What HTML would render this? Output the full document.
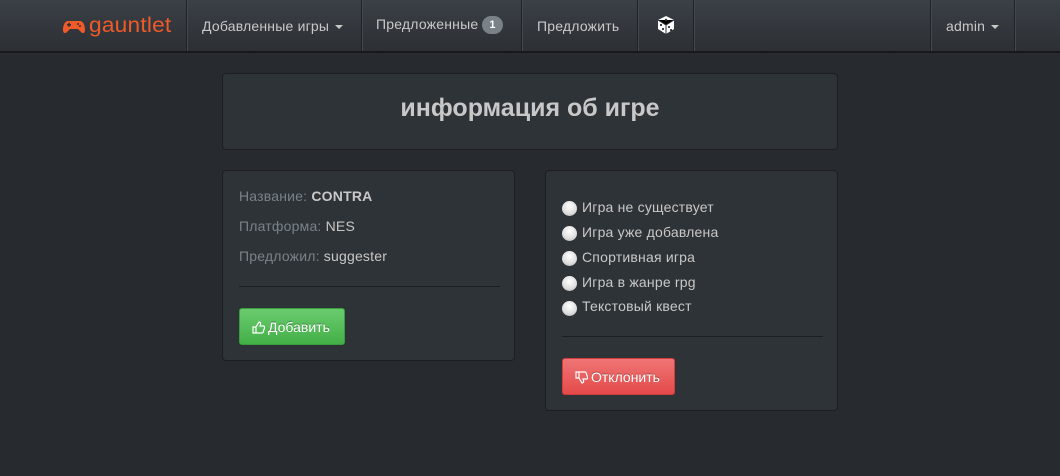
<!DOCTYPE html>
<html><head><meta charset="utf-8"><style>
*{box-sizing:border-box;margin:0;padding:0}
body{width:1060px;height:476px;background:#272b30;font-family:"Liberation Sans",sans-serif;font-size:14px;color:#c8c8c8;position:relative;overflow:hidden}
.nav{position:absolute;left:0;top:0;width:1060px;height:53px;background:linear-gradient(#3b4046,#2c3035);border-bottom:2px solid #16181b}
.sep{position:absolute;top:0;height:51px;width:1px;background:#202326;box-shadow:1px 0 0 #43484e}
.ni{position:absolute;top:18px;color:#c8c8c8;font-size:14px;letter-spacing:0.2px}
.caret{display:inline-block;width:0;height:0;border-left:4px solid transparent;border-right:4px solid transparent;border-top:4px solid #c8c8c8;vertical-align:middle;margin-left:6px}
.badge{display:inline-block;background:#7a8288;color:#fff;border-radius:10px;font-size:11px;font-weight:bold;padding:3px 7px;margin-left:4px;vertical-align:1px}
.panel{position:absolute;background:#2e3338;border:1px solid #1c1e22;border-radius:4px}
.hr{position:absolute;height:1px;background:#1c1e22}
.lbl{color:#7a8288}
.btn{position:absolute;height:37px;border-radius:3px;color:#fff;font-size:14px;line-height:36px;padding-left:12px;text-shadow:0 -1px 0 rgba(0,0,0,.3)}
.btn svg{vertical-align:-2px;margin-right:3px}
.radio{position:absolute;left:16px;width:15px;height:15px;border-radius:50%;background:radial-gradient(circle at 50% 35%,#fff,#ddd 60%,#aaa);}
.rt{position:absolute;left:36px;font-size:14px;color:#c8c8c8;letter-spacing:0.2px}
</style></head><body>
<div class="nav">
 <svg style="position:absolute;left:63px;top:20px" width="22" height="14" viewBox="0 0 22 14"><path d="M5 1h12c3 0 5 4 5 9 0 3-2 4-4 2l-3-3H7l-3 3c-2 2-4 1-4-2 0-5 2-9 5-9z" fill="#f05a28"/><rect x="4" y="4" width="4" height="1.6" fill="#2f3338"/><rect x="5.2" y="2.8" width="1.6" height="4" fill="#2f3338"/><circle cx="15" cy="4" r="1" fill="#2f3338"/><circle cx="17" cy="6" r="1" fill="#2f3338"/></svg>
 <div class="ni" style="left:89px;top:14px;color:#f05a28;font-size:21px;transform:scaleX(1.08);transform-origin:left">gauntlet</div>
 <div class="sep" style="left:186px"></div>
 <div class="ni" style="left:202px">Добавленные игры<span class="caret"></span></div>
 <div class="sep" style="left:361px"></div>
 <div class="ni" style="left:376px;top:16px">Предложенные<span class="badge">1</span></div>
 <div class="sep" style="left:521px"></div>
 <div class="ni" style="left:537px">Предложить</div>
 <div class="sep" style="left:637px"></div>
 <svg style="position:absolute;left:656px;top:15px" width="20" height="20" viewBox="0 0 20 20"><path d="M10 1l8 4v9l-8 5-8-5V5z" fill="#fff"/><path d="M10 10v9M2 5l8 5 8-5" stroke="#2f3338" stroke-width="1"/><circle cx="10" cy="5" r="1.2" fill="#2f3338"/><circle cx="5" cy="10" r="1.1" fill="#2f3338"/><circle cx="7" cy="14" r="1.1" fill="#2f3338"/><circle cx="13" cy="12" r="1.1" fill="#2f3338"/><circle cx="15" cy="15" r="1.1" fill="#2f3338"/></svg>
 <div class="sep" style="left:693px"></div>
 <div class="sep" style="left:930px"></div>
 <div class="ni" style="left:946px">admin<span class="caret"></span></div>
 <div class="sep" style="left:1014px"></div>
</div>

<div class="panel" style="left:222px;top:73px;width:616px;height:77px">
 <div style="position:absolute;left:0;right:0;top:20px;text-align:center;font-size:25px;font-weight:bold;color:#c8c8c8">информация об игре</div>
</div>

<div class="panel" style="left:222px;top:170px;width:293px;height:191px">
 <div style="position:absolute;left:16px;top:17px;letter-spacing:0.2px"><span class="lbl">Название:</span> <b>CONTRA</b></div>
 <div style="position:absolute;left:16px;top:47px;letter-spacing:0.2px"><span class="lbl">Платформа:</span> NES</div>
 <div style="position:absolute;left:16px;top:77px;letter-spacing:0.2px"><span class="lbl">Предложил:</span> suggester</div>
 <div class="hr" style="left:16px;top:115px;width:261px"></div>
 <div class="btn" style="left:16px;top:137px;width:106px;background:linear-gradient(#6acb6e,#43b047);border:1px solid #3a9d3e"><svg width="13" height="13" viewBox="0 0 13 13"><path d="M1 6h3v6H1zM4 6l3-5c1 0 2 1 1.5 2.5L8 5h3.5c1 0 1.5 1 1 2l-1.5 4.5c-.3.5-.8.5-1.2.5H4" fill="none" stroke="#fff" stroke-width="1.2"/></svg>Добавить</div>
</div>

<div class="panel" style="left:545px;top:170px;width:293px;height:241px">
 <div class="radio" style="top:30px"></div><div class="rt" style="top:28px">Игра не существует</div>
 <div class="radio" style="top:55px"></div><div class="rt" style="top:53px">Игра уже добавлена</div>
 <div class="radio" style="top:80px"></div><div class="rt" style="top:78px">Спортивная игра</div>
 <div class="radio" style="top:105px"></div><div class="rt" style="top:103px">Игра в жанре rpg</div>
 <div class="radio" style="top:130px"></div><div class="rt" style="top:127px">Текстовый квест</div>
 <div class="hr" style="left:16px;top:165px;width:261px"></div>
 <div class="btn" style="left:16px;top:187px;width:113px;background:linear-gradient(#f07575,#e44a4a);border:1px solid #d33c3c"><svg width="13" height="13" viewBox="0 0 13 13"><path d="M1 1h3v6H1zM4 7l3 5c1 0 2-1 1.5-2.5L8 8h3.5c1 0 1.5-1 1-2L11 1.5C10.7 1 10.2 1 9.8 1H4" fill="none" stroke="#fff" stroke-width="1.2"/></svg>Отклонить</div>
</div>
</body></html>
